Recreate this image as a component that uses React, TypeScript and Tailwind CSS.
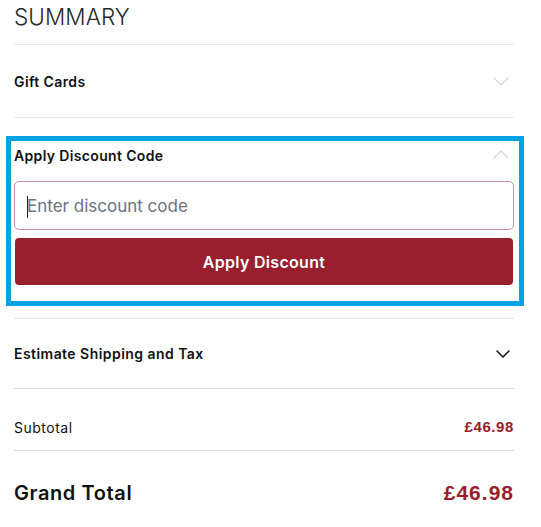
import React from 'react';

const SANS = "font-['Inter','Noto_Sans',sans-serif]";
const PRICE = "font-['Liberation_Sans',Arial,sans-serif]";

function Chevron({ up = false, dark = false }: { up?: boolean; dark?: boolean }) {
  if (dark) {
    return (
      <svg width="14" height="8" viewBox="0 0 14 8" fill="none" className="text-[#1a1a1a]">
        <path d="M1 1 L7 7 L13 1" stroke="currentColor" strokeWidth={1.6} strokeLinecap="round" strokeLinejoin="round" />
      </svg>
    );
  }
  return (
    <svg width="16" height="9" viewBox="0 0 16 9" fill="none" className="text-[#d6d6d6]">
      <path
        d={up ? 'M1 8 L8 1 L15 8' : 'M1 1 L8 8 L15 1'}
        stroke="currentColor"
        strokeWidth={1.3}
        strokeLinecap="round"
        strokeLinejoin="round"
      />
    </svg>
  );
}

export default function App() {
  return (
    <div className={`${SANS} bg-white w-[541px] h-[527px] overflow-hidden text-[#111]`}>
      <div className="ml-[14px] w-[500px]">
        {/* Heading */}
        <h2 className="h-[44px] pt-[1px] text-[22.5px] leading-[32px] font-light tracking-[0.1px] text-[#2a2a2a]">
          SUMMARY
        </h2>
        <div className="h-px bg-[#e6e6e6]" />

        {/* Gift cards (collapsed) */}
        <div className="h-[72px] flex items-center justify-between">
          <span className="text-[14px] font-semibold tracking-[0.4px]">Gift Cards</span>
          <span className="mr-[5px]"><Chevron /></span>
        </div>
        <div className="h-px bg-[#e6e6e6]" />

        {/* Discount code (open) */}
        <div className="mt-[18px] ml-[-8px] mr-[-10px] border-[5px] border-[#00a3e4] pl-[3px] pr-[5px] pb-[16px]">
          <div className="h-[28px] flex items-center justify-between">
            <span className="text-[14px] font-semibold tracking-[0.35px]">Apply Discount Code</span>
            <span className="mr-[5px] mb-[2px]"><Chevron up /></span>
          </div>
          <div className="mt-[12px] h-[49px] rounded-[5px] border border-[#c9959c] flex items-center pl-[12px] pt-[3px]">
            <span className="w-px h-[22px] bg-[#222] mr-[-1px]" />
            <input
              className="flex-1 bg-transparent outline-none text-[17px] text-[#222] placeholder:text-[#6b7280] pl-0"
              placeholder="Enter discount code"
            />
          </div>
          <button className="mt-[8px] mx-px w-[498px] h-[47px] rounded-[4px] bg-[#98202e] text-white text-[16px] font-semibold tracking-[0.3px]">
            Apply Discount
          </button>
        </div>

        <div className="mt-[12px] h-px bg-[#e2e2e6]" />

        {/* Shipping estimate (collapsed) */}
        <div className="h-[69px] flex items-center justify-between">
          <span className="text-[14px] font-semibold tracking-[0.45px]">Estimate Shipping and Tax</span>
          <span className="mr-[4px]"><Chevron dark /></span>
        </div>
        <div className="h-px bg-[#dcdce0]" />

        {/* Totals */}
        <div className="h-[61px] pt-[16px] flex items-center justify-between">
          <span className="text-[14px] tracking-[0.5px]">Subtotal</span>
          <span className={`${PRICE} text-[15px] font-bold tracking-[0.6px] text-[#9b1c2c]`}>£46.98</span>
        </div>
        <div className="h-px bg-[#dcdce0]" />
        <div className="h-[84px] flex items-center justify-between">
          <span className="text-[20px] font-semibold tracking-[0.6px]">Grand Total</span>
          <span className={`${PRICE} text-[21px] font-bold tracking-[1px] text-[#9b1c2c]`}>£46.98</span>
        </div>
      </div>
    </div>
  );
}
